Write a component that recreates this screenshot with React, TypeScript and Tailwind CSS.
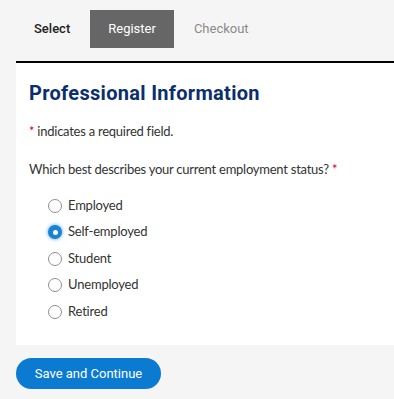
const options = ["Employed", "Self-employed", "Student", "Unemployed", "Retired"];

export default function App() {
  const selected = "Self-employed";
  return (
    <div className="w-[394px] h-[399px] bg-[#f5f5f5] overflow-hidden" style={{ fontFamily: "Lato, sans-serif" }}>
      <div className="flex items-center h-[61px] pl-[16px] pt-[10px] pb-[13px]" style={{ fontFamily: "Roboto, sans-serif" }}>
        <div className="pl-[18px] pr-[20px] h-[38px] flex items-center text-[13px] text-[#222] font-medium">Select</div>
        <div className="px-[18px] h-[38px] flex items-center text-[13px] text-white bg-[#666666]">Register</div>
        <div className="px-[20px] h-[38px] flex items-center text-[13px] text-[#8a8a8a]">Checkout</div>
      </div>
      <div className="ml-[16px] border-t-[2px] border-black bg-white h-[284px] pl-[13px] pt-[18px]">
        <h1 className="text-[20px] leading-[24px] font-bold text-[#0b2f6b] tracking-[0.3px]" style={{ fontFamily: "Roboto, sans-serif" }}>
          Professional Information
        </h1>
        <p className="mt-[18px] text-[13px] leading-[16px] text-[#333] tracking-[-0.25px]">
          <span className="text-[#d0021b]">*</span> indicates a required field.
        </p>
        <p className="mt-[22px] text-[13px] leading-[16px] text-[#333] tracking-[-0.25px]">
          Which best describes your current employment status? <span className="text-[#d0021b]">*</span>
        </p>
        <div className="mt-[21px] pl-[19px] flex flex-col gap-[11.5px]">
          {options.map((o) => (
            <label key={o} className="flex items-center gap-[6px] h-[15px] text-[13px] text-[#333] tracking-[-0.2px]">
              {o === selected ? (
                <span className="w-[14px] h-[14px] rounded-full bg-[#1a82d4] flex items-center justify-center shadow-[0_0_3px_1px_rgba(26,130,212,0.45)]">
                  <span className="w-[5px] h-[5px] rounded-full bg-white" />
                </span>
              ) : (
                <span className="w-[14px] h-[14px] rounded-full border border-[#8f8f8f] bg-white" />
              )}
              {o}
            </label>
          ))}
        </div>
      </div>
      <div className="pl-[16px] pt-[13px]">
        <button
          className="h-[31px] w-[145px] rounded-full bg-[#0a7bd1] text-white text-[13px]"
          style={{ fontFamily: "Roboto, sans-serif" }}
        >
          Save and Continue
        </button>
      </div>
    </div>
  );
}
